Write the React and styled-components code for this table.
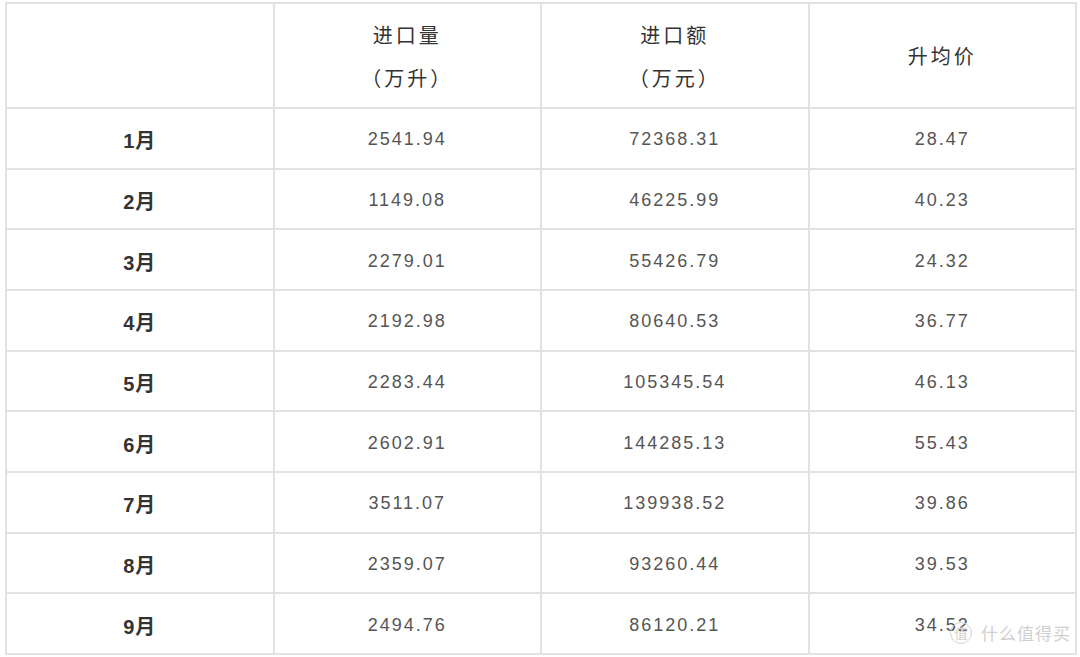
import React from 'react';
import styled, { createGlobalStyle } from 'styled-components';

const GlobalStyle = createGlobalStyle`
  html, body {
    margin: 0;
    padding: 0;
    background: #fff;
  }
  body {
    font-family: "Liberation Sans", "Noto Sans CJK SC", sans-serif;
  }
`;

const Page = styled.div`
  position: relative;
  width: 1080px;
  height: 657px;
  padding: 2px 3px 0 5px;
  box-sizing: border-box;
  overflow: hidden;
`;

const Table = styled.table`
  width: 1072px;
  table-layout: fixed;
  border-collapse: collapse;
  border: 2px solid #e2e2e2;
`;

const HeadCell = styled.th`
  height: 99px;
  padding: 4px 0 0;
  border: 2px solid #e2e2e2;
  font-weight: normal;
  font-size: 20px;
  letter-spacing: 3px;
  line-height: 43px;
  color: #333;
  text-align: center;
  vertical-align: middle;
`;

const Row = styled.tr`
  height: 60.67px;
`;

const Cell = styled.td`
  padding: 3px 0 0;
  border: 2px solid #e2e2e2;
  text-align: center;
  vertical-align: middle;
  font-size: ${p => (p.$label ? '20px' : '18px')};
  font-weight: ${p => (p.$label ? 'bold' : 'normal')};
  letter-spacing: ${p => (p.$label ? '1px' : '2px')};
  color: ${p => (p.$label ? '#333' : '#555')};
`;

const Watermark = styled.div`
  position: absolute;
  right: 9px;
  bottom: 12px;
  display: flex;
  align-items: center;
  gap: 9px;
  color: #cfcfcf;
  font-family: "Noto Sans CJK SC", sans-serif;
  font-size: 17px;
  letter-spacing: 1px;
  text-shadow: 0 0 1px #fff, 0 0 1px #fff;
`;

const Badge = styled.span`
  width: 20px;
  height: 20px;
  border-radius: 50%;
  border: 1.5px solid #d4d4d4;
  display: flex;
  align-items: center;
  justify-content: center;
  font-size: 13px;
  letter-spacing: 0;
  color: #cfcfcf;
`;

const rows = [
  ['1月', '2541.94', '72368.31', '28.47'],
  ['2月', '1149.08', '46225.99', '40.23'],
  ['3月', '2279.01', '55426.79', '24.32'],
  ['4月', '2192.98', '80640.53', '36.77'],
  ['5月', '2283.44', '105345.54', '46.13'],
  ['6月', '2602.91', '144285.13', '55.43'],
  ['7月', '3511.07', '139938.52', '39.86'],
  ['8月', '2359.07', '93260.44', '39.53'],
  ['9月', '2494.76', '86120.21', '34.52'],
];

const App = () => (
  <Page>
    <GlobalStyle />
    <Table>
      <thead>
        <tr>
          <HeadCell />
          <HeadCell>进口量<br />（万升）</HeadCell>
          <HeadCell>进口额<br />（万元）</HeadCell>
          <HeadCell>升均价</HeadCell>
        </tr>
      </thead>
      <tbody>
        {rows.map(r => (
          <Row key={r[0]}>
            <Cell $label>{r[0]}</Cell>
            <Cell>{r[1]}</Cell>
            <Cell>{r[2]}</Cell>
            <Cell>{r[3]}</Cell>
          </Row>
        ))}
      </tbody>
    </Table>
    <Watermark>
      <Badge>值</Badge>
      什么值得买
    </Watermark>
  </Page>
);

export default App;
